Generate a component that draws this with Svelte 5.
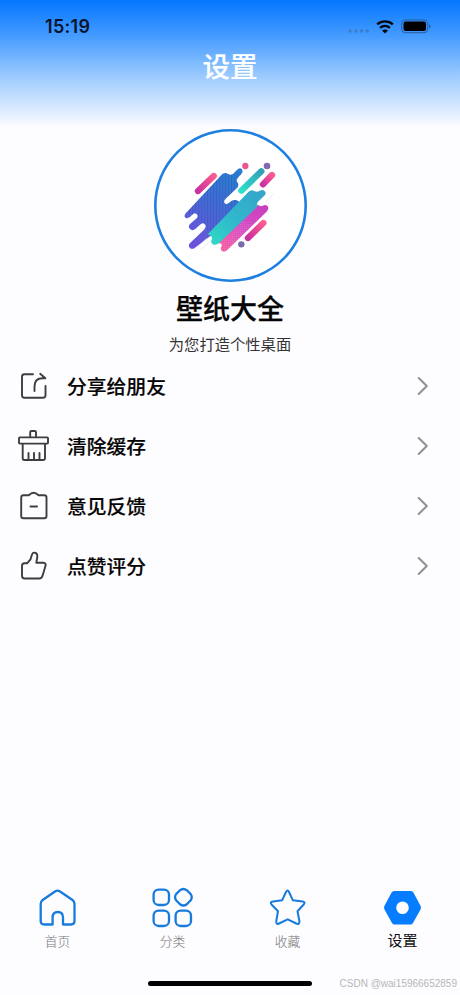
<script>
  const rows = [
    { icon: 'share', label: '分享给朋友' },
    { icon: 'clean', label: '清除缓存' },
    { icon: 'feedback', label: '意见反馈' },
    { icon: 'like', label: '点赞评分' }
  ];

  const tabs = [
    { icon: 'home', label: '首页' },
    { icon: 'category', label: '分类' },
    { icon: 'star', label: '收藏' },
    { icon: 'settings', label: '设置' }
  ];

  let active = $state('settings');
</script>

<div class="screen">
  <header>
    <div class="status">
      <span class="time">15:19</span>
      <div class="signals">
        <svg class="dots" width="22" height="14" viewBox="0 0 22 14">
          <circle cx="2.2" cy="11" r="1.7" />
          <circle cx="7.9" cy="11" r="1.7" />
          <circle cx="13.6" cy="11" r="1.7" />
          <circle cx="19.3" cy="11" r="1.7" />
        </svg>
        <svg class="wifi" width="18" height="14" viewBox="0 0 18 14">
          <path d="M1.2 4.4C5.7.4 12.3.4 16.8 4.4" />
          <path d="M4.1 7.8C7 5.3 11 5.3 13.9 7.8" />
          <path class="solid" d="M9 13.4L6 10.5C7.5 9 10.5 9 12 10.5Z" />
        </svg>
        <svg class="battery" width="30" height="15" viewBox="0 0 30 15">
          <rect class="shell" x=".7" y=".9" width="26" height="12.8" rx="3.8" />
          <rect x="2.5" y="2.6" width="22.5" height="9.4" rx="2.2" />
          <path class="cap" d="M28 5.3Q29.5 6 29.5 7.3T28 9.3Z" />
        </svg>
      </div>
    </div>
    <h1>设置</h1>
  </header>

  <section class="profile">
    <div class="avatar">
      <svg width="100" height="100" viewBox="0 0 300 300">
        <defs>
          <linearGradient id="blue" x1="0.7" y1="0" x2="0.2" y2="1">
            <stop offset="0" stop-color="#287dd1" />
            <stop offset="0.5" stop-color="#4968d5" />
            <stop offset="1" stop-color="#6e50da" />
          </linearGradient>
          <linearGradient id="teal" x1="1" y1="0" x2="0" y2="1">
            <stop offset="0" stop-color="#36a3cb" />
            <stop offset="0.55" stop-color="#30b8cb" />
            <stop offset="1" stop-color="#2fdcc5" />
          </linearGradient>
          <linearGradient id="magenta" x1="1" y1="0" x2="0" y2="1">
            <stop offset="0" stop-color="#c83cbd" />
            <stop offset="0.5" stop-color="#d750c5" />
            <stop offset="1" stop-color="#fb609a" />
          </linearGradient>
          <linearGradient id="pill" x1="1" y1="0" x2="0" y2="1">
            <stop offset="0" stop-color="#fa5b91" />
            <stop offset="1" stop-color="#cc309f" />
          </linearGradient>
          <linearGradient id="mint" x1="1" y1="0" x2="0" y2="1">
            <stop offset="0" stop-color="#31a0b8" />
            <stop offset="1" stop-color="#2de1cb" />
          </linearGradient>
          <pattern id="stripes" width="9" height="8" patternUnits="userSpaceOnUse">
            <path d="M2 0V8" stroke="#2353b2" stroke-width="2.4" opacity=".5" />
          </pattern>
          <pattern id="mesh" width="6" height="6" patternUnits="userSpaceOnUse">
            <circle cx="2" cy="2" r="1.3" fill="#fff" opacity=".35" />
          </pattern>
        </defs>
        <path fill="url(#blue)" d="M16 173L125 56Q133 48 143 53Q151 59 160 53L170 43Q179 33 186 40Q190 47 184 54L173 66Q167 73 173 80Q178 87 171 96L137 128Q128 137 136 143Q142 146 149 139Q158 130 168 132Q183 138 180 148L150 184L95 237L45 275Q36 282 29 275Q23 267 31 260L72 221Q81 211 74 204Q68 198 60 206L46 219Q37 226 30 219Q23 212 30 204L50 187Q56 179 49 173Q43 169 36 177Q27 189 18 186Q10 182 16 173Z" />
        <path fill="url(#stripes)" d="M16 173L125 56Q133 48 143 53Q151 59 160 53L170 43L184 54L173 66Q167 73 173 80Q178 87 171 96L137 128Q128 137 136 143Q142 146 149 139Q158 130 168 132Q183 138 180 148L150 184L95 237L78 216Q78 205 69 202L50 187Q56 179 49 173Q43 169 36 177L16 173Z" />
        <path fill="url(#magenta)" d="M234 146Q240 153 248 149Q259 144 264 152Q267 160 259 168L141 283Q132 291 125 284Q120 277 125 270Q127 263 119 262L108 262Z" />
        <path fill="url(#mesh)" d="M185 198L220 200L141 283Q132 291 125 284Q120 277 125 270Q127 263 119 262Z" />
        <path fill="url(#teal)" d="M205 108Q214 99 223 105Q231 110 239 104Q251 99 256 108Q259 114 252 120L234 137Q228 144 234 150L120 259Q106 271 97 264Q91 258 95 251Q98 244 91 238L83 235Z" />
        <path stroke="url(#pill)" class="pill" d="M54 105L101 60" />
        <path stroke="url(#mint)" class="pill" d="M184 104L244 46" />
        <path stroke="url(#pill)" class="pill" d="M249 85L276 57" />
        <path stroke="url(#pill)" class="pill" d="M204 246L250 201" />
        <circle cx="196" cy="30" r="9.5" fill="#e85791" />
        <circle cx="261" cy="30" r="10" fill="#8469b0" />
        <circle cx="184" cy="265" r="9.5" fill="#796aad" />
        <path class="trace" d="M256 140L280 113M48 279L79 247M62 281L90 257" />
      </svg>
    </div>
    <h2>壁纸大全</h2>
    <p>为您打造个性桌面</p>
  </section>

  <ul class="menu">
    {#each rows as row}
      <li>
        <svg class="row-icon" width="32" height="34" viewBox="0 0 32 34">
          {#if row.icon === 'share'}
            <path d="M15 5.2H6.5Q4 5.2 4 7.7V26.2Q4 28.7 6.5 28.7H25Q27.5 28.7 27.5 26.2V17" />
            <path d="M16.5 22V17.5Q16.5 9.3 24.5 9.3H27.3M22.2 4.8L27.3 9.3" />
          {:else if row.icon === 'clean'}
            <path d="M12.2 8V3.2Q12.2 2 13.4 2H16.8Q18 2 18 3.2V8" />
            <rect x="1" y="8.4" width="29" height="6.2" rx=".8" />
            <path d="M4.7 15V29.3Q4.7 31 6.3 31H25Q27 31 27 29.2V15M10.5 31V24M16 31V24M21.5 31V24" />
          {:else if row.icon === 'feedback'}
            <path d="M10.7 6.2H5.5Q3.2 6.2 3.2 8.5V27Q3.2 29.3 5.5 29.3H26.3Q28.5 29.3 28.5 27V8.5Q28.5 6.2 26.3 6.2H20.6Q17.8 3.8 15.6 3.8T10.7 6.2Z" />
            <path d="M12.5 17.5H19" />
          {:else}
            <path d="M6.5 14.2H9.3L12.5 10.3L14 5.5Q14.8 3.4 16.7 3.7Q19.8 4.2 19.3 8L18.3 13.7H25.3Q28.2 14 27.6 16.6L24.8 26Q23.9 29.5 21.2 29.5H6.7Q4 29.5 4 26.8V16.8Q4 14.2 6.5 14.2Z" />
          {/if}
        </svg>
        <span>{row.label}</span>
        <svg class="arrow" width="12" height="20" viewBox="0 0 12 20">
          <path d="M1.7 2L9.8 10L1.7 18" />
        </svg>
      </li>
    {/each}
  </ul>

  <nav>
    {#each tabs as tab}
      <button class:active={active === tab.icon} onclick={() => (active = tab.icon)}>
        <svg width="42" height="42" viewBox="0 0 42 42">
          {#if tab.icon === 'home'}
            <path d="M3.7 17Q3.7 14.5 5.7 13L18 4.5Q20.5 2.8 23 4.5L35.5 13Q37.5 14.5 37.5 17V34Q37.5 37.5 34 37.5H26V30.5Q26 25 20.8 25T15.6 30.5V37.5H7.7Q3.7 37.5 3.7 34Z" />
          {:else if tab.icon === 'category'}
            <rect x="1.6" y="2.6" width="15.4" height="15.4" rx="5" />
            <rect x="1.6" y="23.6" width="15.4" height="15.4" rx="5" />
            <rect x="23.6" y="23.6" width="15.4" height="15.4" rx="5" />
            <path d="M28 3.2Q31.4.7 34.8 3.2L38.5 6.9Q41 10.2 38.5 13.5L34.8 17.2Q31.400 19.7 28 17.2L24.300 13.5Q21.8 10.2 24.300 6.900Z" />
          {:else if tab.icon === 'star'}
            <path class="thin" d="M19 5Q20.5 2 22 5L25.8 13.2L35.8 14.5Q38.8 15.3 36.7 17.5L30.5 24.2L32.4 34Q32.7 38 29.3 36.5L20.7 32.3L12 36.5Q8.9 38 9.3 34L11 24.2L4.5 17.5Q2.5 15 6 14.4L15.2 13.2Z" />
          {:else}
            <path class="gear" fill-rule="evenodd" d="M12 4H29Q30.5 4 31.4 5.5L38.5 18.8Q39.5 20.7 38.5 22.5L31 36Q30.1 37.5 28.5 37.5H12.5Q10.9 37.5 10 36L2.5 22.5Q1.5 20.7 2.5 18.8L9.6 5.5Q10.5 4 12 4ZM20.5 14.5A6.3 6.3 0 1 0 20.5 27.1A6.3 6.3 0 1 0 20.5 14.5Z" />
          {/if}
        </svg>
        <span>{tab.label}</span>
      </button>
    {/each}
  </nav>

  <footer>
    <div class="indicator"></div>
    <span class="watermark">CSDN @wai15966652859</span>
  </footer>
</div>

<style>
  :global(body) {
    background: #fdfcff;
  }

  .screen {
    display: flex;
    flex-direction: column;
    height: 995px;
    background: #fdfcff;
    font-family: "Noto Sans CJK SC", "Noto Sans", sans-serif;
    color: #050505;
    overflow: hidden;
  }

  svg {
    display: block;
    flex: none;
  }

  header {
    height: 129px;
    background: linear-gradient(#0376ff 0, #459bff 36px, #9bcaff 76px, #fdfcff 127px);
  }

  .status {
    display: flex;
    justify-content: space-between;
    align-items: center;
    height: 45px;
    padding: 8px 29px 0 45px;
    box-sizing: border-box;
  }

  .time {
    font: 600 18px/20px Inter, sans-serif;
    letter-spacing: 0.3px;
    color: #07142d;
  }

  .signals {
    display: flex;
    align-items: center;
  }

  .dots {
    margin-right: 6px;
    fill: #397ec9;
  }

  .wifi {
    margin-right: 7px;
    fill: none;
    stroke: #020810;
    stroke-width: 2.4;
  }

  .wifi .solid {
    fill: #020810;
    stroke: none;
  }

  .battery .shell {
    fill: none;
    stroke: #285e9e;
    stroke-width: 1;
  }

  .battery .cap {
    fill: #285e9e;
  }

  h1 {
    margin: 0;
    font-size: 27.5px;
    font-weight: 500;
    line-height: 40px;
    text-align: center;
    color: #fff;
    -webkit-text-stroke: 0.2px #fff;
  }

  .profile {
    display: flex;
    flex-direction: column;
    align-items: center;
  }

  .avatar {
    display: flex;
    align-items: center;
    justify-content: center;
    width: 153px;
    height: 153px;
    border-radius: 50%;
    background: #fff;
    box-shadow: inset 0 0 0 2.6px #1d7fe0;
  }

  .pill {
    fill: none;
    stroke-width: 19;
    stroke-linecap: round;
  }

  .trace {
    fill: none;
    stroke: #e3dff2;
    stroke-width: 2;
  }

  h2 {
    margin: 6px 0 0;
    font-size: 27px;
    font-weight: 500;
    line-height: 40px;
    -webkit-text-stroke: 0.3px #050505;
  }

  p {
    margin: 4px 0 0;
    font-size: 15.3px;
    line-height: 23px;
    color: #333;
  }

  .menu {
    margin: 1px 0 0;
    padding: 0;
    list-style: none;
  }

  li {
    display: flex;
    align-items: center;
    height: 60px;
    padding: 0 31px 0 18px;
  }

  li span {
    flex: 1;
    margin-left: 17px;
    font-size: 19.8px;
    font-weight: 500;
    line-height: 30px;
    -webkit-text-stroke: 0.15px #050505;
  }

  .row-icon {
    fill: none;
    stroke: #3e3e42;
    stroke-width: 1.9;
    stroke-linecap: round;
    stroke-linejoin: round;
  }

  .arrow {
    fill: none;
    stroke: #919194;
    stroke-width: 2;
    stroke-linecap: round;
    stroke-linejoin: round;
  }

  nav {
    display: grid;
    grid-template-columns: repeat(4, 1fr);
    margin-top: auto;
    height: 94px;
  }

  button {
    display: flex;
    flex-direction: column;
    align-items: center;
    padding: 0;
    border: 0;
    background: none;
    font: 12.8px/20px "Noto Sans CJK SC", sans-serif;
    font-weight: 300;
    color: #757577;
  }

  button span {
    margin-top: 2px;
  }

  button svg {
    fill: none;
    stroke: #167bdc;
    stroke-width: 2.3;
    stroke-linejoin: round;
  }

  button .thin {
    stroke-width: 2;
  }

  button .gear {
    fill: #067cff;
    stroke: none;
  }

  .active {
    font-size: 15px;
    font-weight: 400;
    color: #101010;
  }

  .active span {
    margin-top: 1px;
  }

  footer {
    display: grid;
    grid-template-columns: 148px 164px 1fr;
    height: 14px;
    flex: none;
  }

  .indicator {
    grid-column: 2;
    height: 5px;
    border-radius: 3px;
    background: #000;
  }

  .watermark {
    justify-self: end;
    margin-right: 3px;
    font: 10px/6px "Liberation Sans", sans-serif;
    white-space: nowrap;
    color: #b7b6b9;
  }
</style>
